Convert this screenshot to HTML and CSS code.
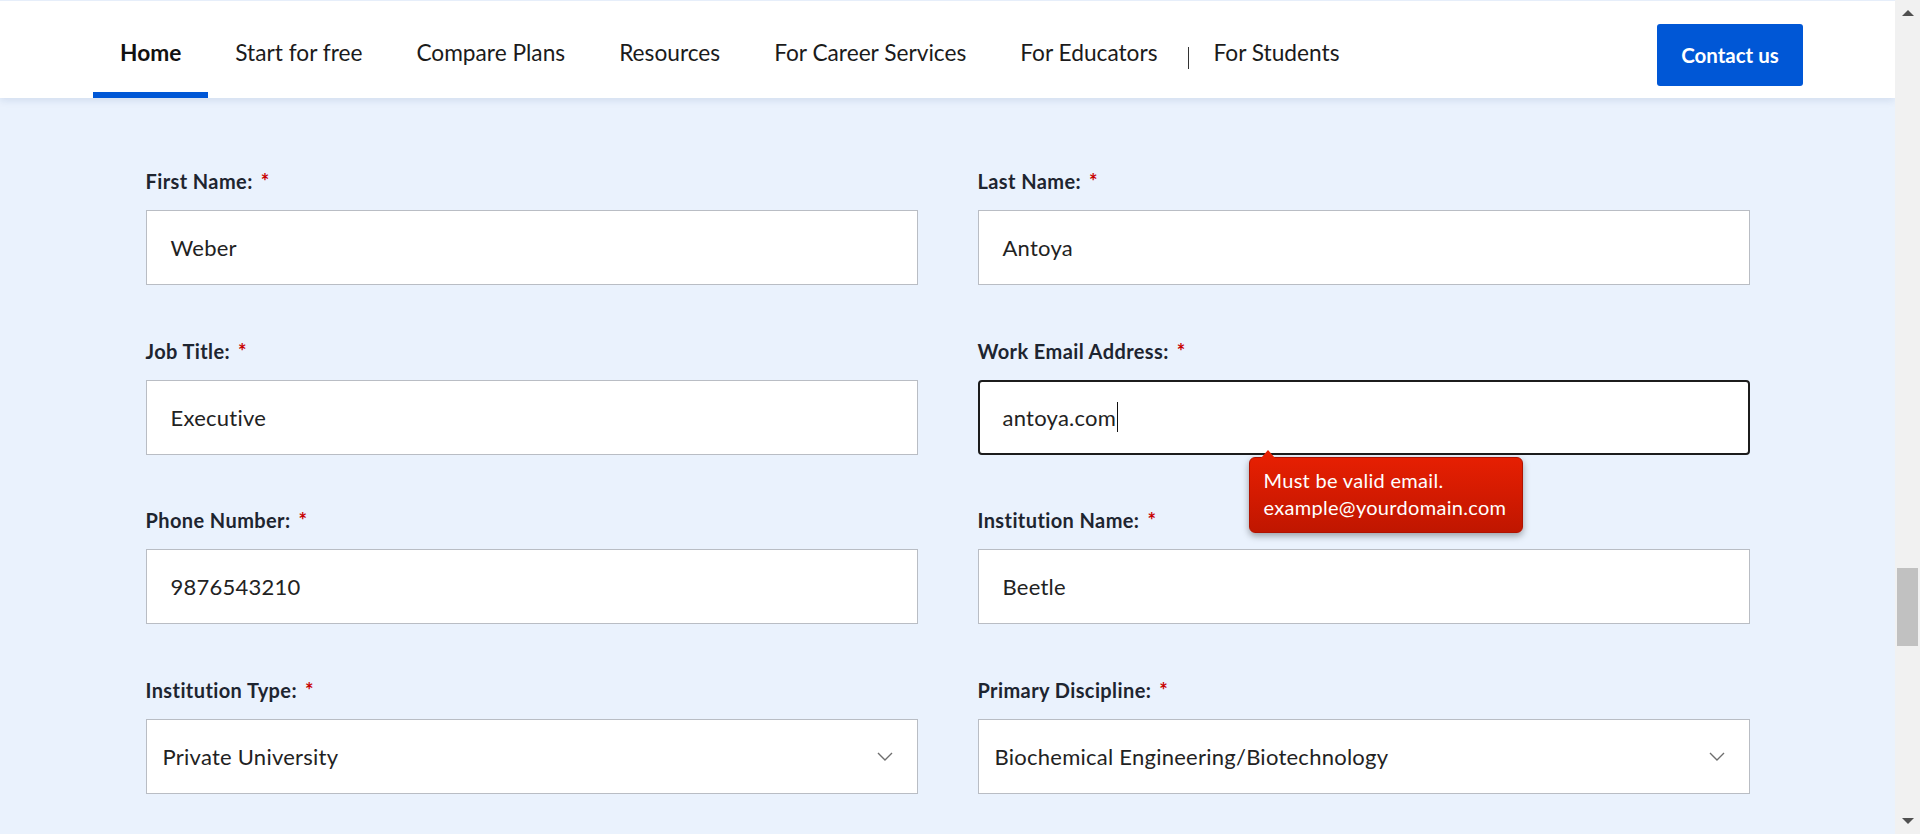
FILE: index.html
```html
<!DOCTYPE html>
<html lang="en">
<head>
<meta charset="utf-8">
<title>Contact form</title>
<link rel="stylesheet" href="styles.css">
</head>
<body>
<div class="window">
  <div class="page">
    <header class="topbar">
      <nav class="nav">
        <a class="nav-item active" href="#">Home</a>
        <a class="nav-item" href="#">Start for free</a>
        <a class="nav-item" href="#">Compare Plans</a>
        <a class="nav-item" href="#">Resources</a>
        <a class="nav-item" href="#">For Career Services</a>
        <a class="nav-item" href="#">For Educators</a>
        <span class="nav-divider"></span>
        <a class="nav-item students" href="#">For Students</a>
      </nav>
      <a class="contact-btn" href="#">Contact us</a>
    </header>
    <main class="content">
      <form class="form-grid">
        <div class="field">
          <label class="field-label">First Name:<span class="req">*</span></label>
          <div class="field-box">Weber</div>
        </div>
        <div class="field">
          <label class="field-label">Last Name:<span class="req">*</span></label>
          <div class="field-box">Antoya</div>
        </div>
        <div class="field">
          <label class="field-label">Job Title:<span class="req">*</span></label>
          <div class="field-box">Executive</div>
        </div>
        <div class="field">
          <label class="field-label">Work Email Address:<span class="req">*</span></label>
          <div class="field-box focused">antoya.com<span class="caret"></span>
            <div class="tooltip">Must be valid email.<br>example@yourdomain.com</div>
          </div>
        </div>
        <div class="field">
          <label class="field-label">Phone Number:<span class="req">*</span></label>
          <div class="field-box">9876543210</div>
        </div>
        <div class="field">
          <label class="field-label">Institution Name:<span class="req">*</span></label>
          <div class="field-box">Beetle</div>
        </div>
        <div class="field">
          <label class="field-label">Institution Type:<span class="req">*</span></label>
          <div class="field-box select"><span>Private University</span>
            <svg class="chevron" width="16" height="9" viewBox="0 0 16 9"><path d="M1 1 L8 8 L15 1" fill="none" stroke="#6e6e6e" stroke-width="1.4"/></svg>
          </div>
        </div>
        <div class="field">
          <label class="field-label">Primary Discipline:<span class="req">*</span></label>
          <div class="field-box select"><span>Biochemical Engineering/Biotechnology</span>
            <svg class="chevron" width="16" height="9" viewBox="0 0 16 9"><path d="M1 1 L8 8 L15 1" fill="none" stroke="#6e6e6e" stroke-width="1.4"/></svg>
          </div>
        </div>
      </form>
    </main>
  </div>
  <div class="scrollbar">
    <span class="sb-up"></span>
    <span class="sb-thumb"></span>
    <span class="sb-down"></span>
  </div>
</div>
</body>
</html>
```

FILE: styles.css
```css
html, body {
  margin: 0;
  height: 100%;
}
body {
  font-family: Lato, "Noto Sans", sans-serif;
  background: #eaf2fd;
  overflow: hidden;
}
.window {
  display: flex;
  height: 834px;
}
.page {
  flex: 1;
  min-width: 0;
  overflow: hidden;
}
.topbar {
  height: 97px;
  border-top: 1px solid #e6eefa;
  background: #fff;
  display: flex;
  justify-content: space-between;
  padding: 0 92px 0 93px;
  box-shadow: 0 2px 8px rgba(20, 60, 120, 0.12);
  position: relative;
  z-index: 1;
}
.nav {
  display: flex;
  height: 100%;
}
.nav-item {
  display: block;
  box-sizing: border-box;
  height: 97px;
  padding: 39px 27px 0;
  font-size: 22.7px;
  line-height: 26px;
  color: #1b1b1b;
  text-decoration: none;
  white-space: nowrap;
}
.nav-item.active {
  font-weight: 700;
  color: #111;
  border-bottom: 6px solid #0057d6;
}
.nav-divider {
  width: 1px;
  height: 22px;
  background: #333;
  margin: 46px 0 0 4px;
}
.nav-item.students {
  padding-left: 24px;
}
.contact-btn {
  margin-top: 23px;
  height: 62px;
  width: 146px;
  box-sizing: border-box;
  display: flex;
  align-items: center;
  justify-content: center;
  background: #0057d6;
  color: #fff;
  font-weight: 700;
  font-size: 20.5px;
  border-radius: 3px;
  text-decoration: none;
}
.content {
  padding-top: 71px;
}
.form-grid {
  width: 1604px;
  margin: 0 auto;
  display: grid;
  grid-template-columns: 1fr 1fr;
  column-gap: 60px;
  row-gap: 53.5px;
}
.field-label {
  display: block;
  font-size: 20px;
  line-height: 24px;
  letter-spacing: 0.4px;
  font-weight: 700;
  color: #1e2530;
  margin-bottom: 17px;
}
.req {
  color: #c80000;
  margin-left: 8px;
}
.field-box {
  height: 75px;
  box-sizing: border-box;
  border: 1px solid #b9bdc4;
  background: #fff;
  padding-left: 24px;
  display: flex;
  align-items: center;
  font-size: 22px;
  letter-spacing: 0.25px;
  color: #222;
}
.field-box.focused {
  border: 2px solid #1c1c1c;
  border-radius: 4px;
  padding-left: 23px;
  position: relative;
}
.caret {
  width: 1px;
  height: 30px;
  background: #111;
  margin-left: 1px;
}
.select {
  padding: 0 24px 0 16px;
  justify-content: space-between;
}
.tooltip {
  position: absolute;
  left: 269px;
  top: calc(100% + 4px);
  padding: 9px 16px 11px 14px;
  white-space: nowrap;
  font-size: 20px;
  letter-spacing: 0.3px;
  line-height: 27px;
  color: #fff;
  background: linear-gradient(#e61f02, #c01600);
  border: 1px solid #b01200;
  border-radius: 6px;
  box-shadow: 0 3px 7px rgba(0, 0, 0, 0.35);
  z-index: 2;
}
.tooltip::before {
  content: "";
  position: absolute;
  left: 11px;
  top: -8px;
  border-left: 7px solid transparent;
  border-right: 7px solid transparent;
  border-bottom: 8px solid #e61f02;
}
.scrollbar {
  width: 25px;
  background: #f1f1f1;
  display: flex;
  flex-direction: column;
  align-items: center;
}
.sb-up {
  margin-top: 10px;
  width: 0;
  height: 0;
  border-left: 6px solid transparent;
  border-right: 6px solid transparent;
  border-bottom: 6px solid #505050;
}
.sb-thumb {
  margin-top: 552px;
  width: 21px;
  height: 78px;
  background: #c1c1c1;
}
.sb-down {
  margin-top: auto;
  margin-bottom: 10px;
  width: 0;
  height: 0;
  border-left: 6px solid transparent;
  border-right: 6px solid transparent;
  border-top: 6px solid #505050;
}
```
